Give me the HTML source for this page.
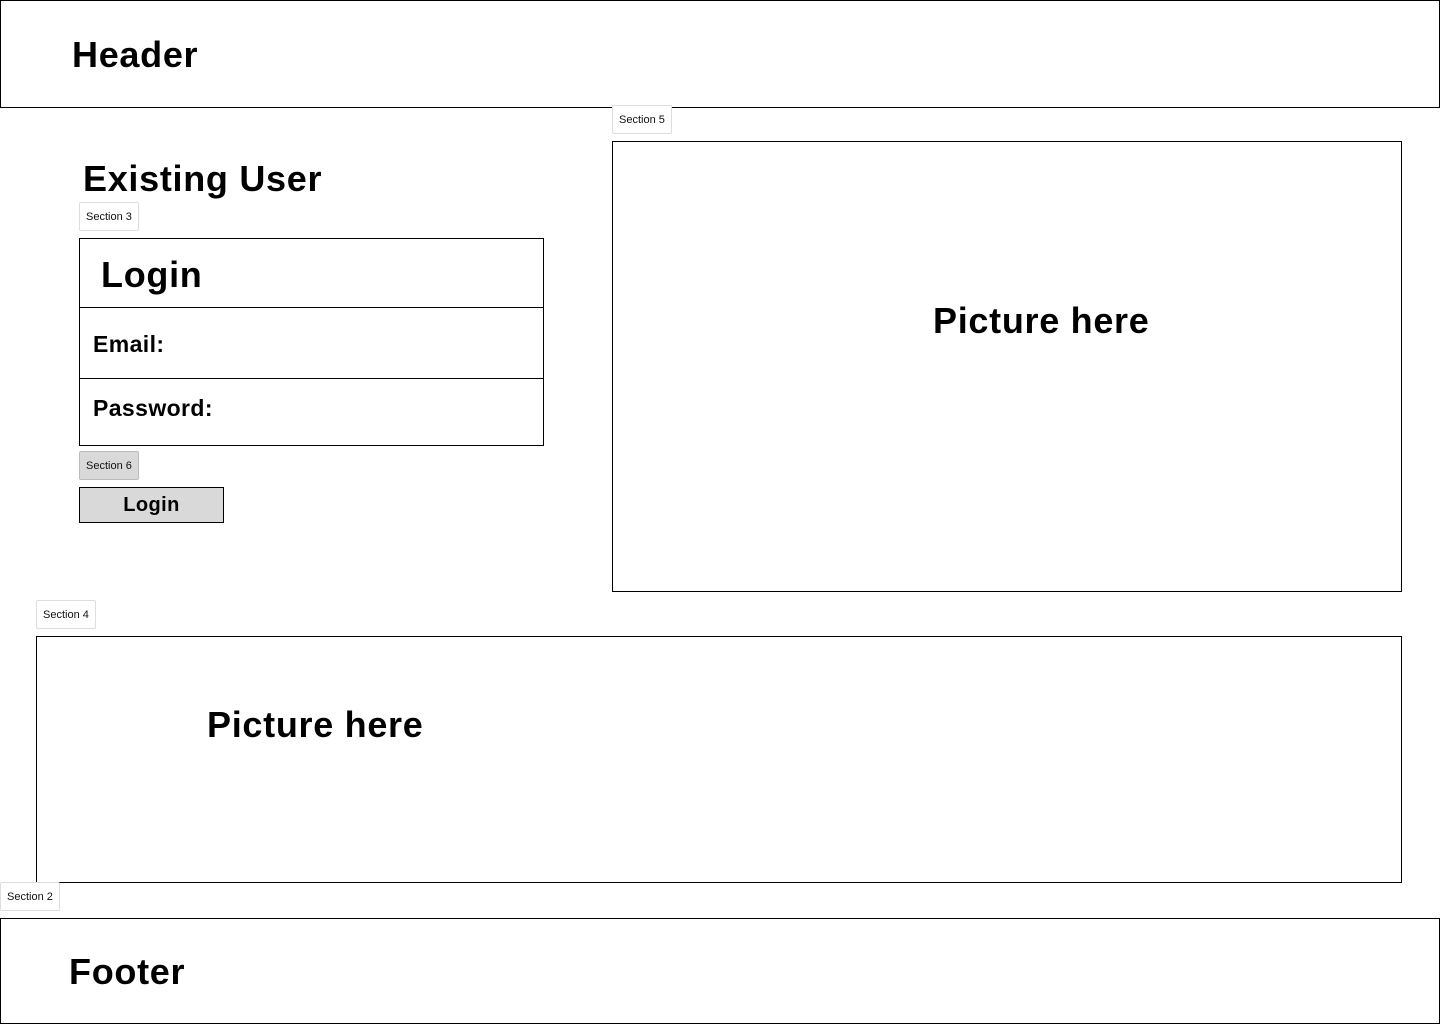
<!DOCTYPE html>
<html><head><meta charset="utf-8"><style>
*{margin:0;padding:0;box-sizing:border-box}
body{width:1440px;height:1024px;position:relative;background:#fff;font-family:"Liberation Sans",sans-serif;color:#000;overflow:hidden}
.b{position:absolute;border:1px solid #000}
.t{position:absolute;font-weight:bold;white-space:nowrap;line-height:1;letter-spacing:0.7px}
.s{letter-spacing:0.4px}
.tag{position:absolute;border:1px solid #ddd;border-radius:2px;font-size:11px;padding:0 6px;height:29px;line-height:28px;background:#fff;color:#111}
</style></head><body>
<div class="b" style="left:0;top:0;width:1440px;height:108px"></div>
<div class="t" style="left:72px;top:37px;font-size:36px">Header</div>

<div class="tag" style="left:612px;top:105px">Section 5</div>
<div class="b" style="left:612px;top:141px;width:790px;height:451px"></div>
<div class="t" style="left:933px;top:303px;font-size:36px">Picture here</div>

<div class="t" style="left:83px;top:161px;font-size:36px">Existing User</div>
<div class="tag" style="left:79px;top:202px">Section 3</div>
<div class="b" style="left:79px;top:238px;width:465px;height:208px"></div>
<div class="t" style="left:101px;top:257px;font-size:36px">Login</div>
<div style="position:absolute;left:79px;top:307px;width:465px;border-top:1px solid #000"></div>
<div class="t s" style="left:93px;top:333px;font-size:23px">Email:</div>
<div style="position:absolute;left:79px;top:378px;width:465px;border-top:1px solid #000"></div>
<div class="t s" style="left:93px;top:397px;font-size:23px">Password:</div>
<div class="tag" style="left:79px;top:451px;background:#d9d9d9;border-color:#bbb">Section 6</div>
<div class="b" style="left:79px;top:487px;width:145px;height:36px;background:#d9d9d9;text-align:center;font-weight:bold;font-size:20px;line-height:34px;letter-spacing:0.4px">Login</div>

<div class="tag" style="left:36px;top:600px">Section 4</div>
<div class="b" style="left:36px;top:636px;width:1366px;height:247px"></div>
<div class="t" style="left:207px;top:707px;font-size:36px">Picture here</div>

<div class="tag" style="left:0;top:882px">Section 2</div>
<div class="b" style="left:0;top:918px;width:1440px;height:106px"></div>
<div class="t" style="left:69px;top:954px;font-size:36px">Footer</div>
</body></html>
